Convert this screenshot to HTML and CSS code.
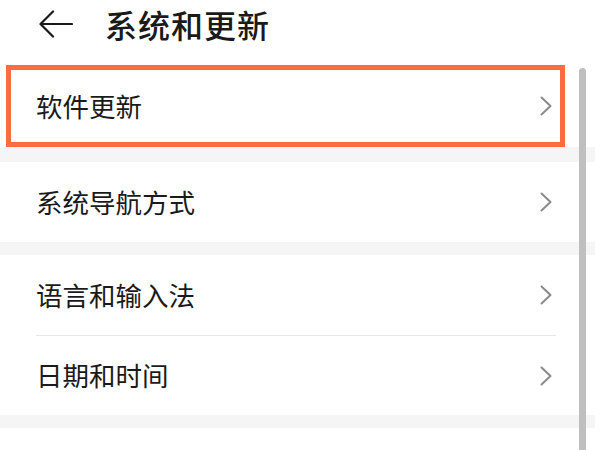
FILE: index.html
```html
<!DOCTYPE html>
<html lang="zh-CN">
<head>
    <meta charset="UTF-8">
    <meta name="viewport" content="width=device-width, initial-scale=1.0">
    <title>系统和更新</title>
    <link rel="stylesheet" href="styles.css">
</head>
<body>
    <div class="screen">
        <!-- 顶部标题栏 -->
        <div class="header">
            <svg class="back" width="34" height="28" viewBox="0 0 34 28">
                <path d="M33 14 H2 M14 1.5 L1.5 14 L14 26.5" fill="none" stroke="#1a1a1a" stroke-width="2.2" stroke-linecap="round" stroke-linejoin="round"/>
            </svg>
            <div class="title">系统和更新</div>
        </div>

        <!-- 高亮的软件更新 -->
        <div class="group highlight">
            <div class="row">
                <span class="label">软件更新</span>
                <svg class="chev" width="12" height="20" viewBox="0 0 12 20"><polyline points="1.5,1.5 10.5,10 1.5,18.5" fill="none" stroke="#8a8a8a" stroke-width="2" stroke-linecap="round" stroke-linejoin="round"/></svg>
            </div>
        </div>
        <div class="band band-first"></div>

        <div class="group">
            <div class="row">
                <span class="label">系统导航方式</span>
                <svg class="chev" width="12" height="20" viewBox="0 0 12 20"><polyline points="1.5,1.5 10.5,10 1.5,18.5" fill="none" stroke="#8a8a8a" stroke-width="2" stroke-linecap="round" stroke-linejoin="round"/></svg>
            </div>
        </div>
        <div class="band"></div>

        <div class="group">
            <div class="row">
                <span class="label">语言和输入法</span>
                <svg class="chev" width="12" height="20" viewBox="0 0 12 20"><polyline points="1.5,1.5 10.5,10 1.5,18.5" fill="none" stroke="#8a8a8a" stroke-width="2" stroke-linecap="round" stroke-linejoin="round"/></svg>
            </div>
            <div class="divider"></div>
            <div class="row row-last">
                <span class="label">日期和时间</span>
                <svg class="chev" width="12" height="20" viewBox="0 0 12 20"><polyline points="1.5,1.5 10.5,10 1.5,18.5" fill="none" stroke="#8a8a8a" stroke-width="2" stroke-linecap="round" stroke-linejoin="round"/></svg>
            </div>
        </div>
        <div class="band"></div>

        <!-- 滚动条 -->
        <div class="scrollbar"></div>
    </div>
</body>
</html>
```

FILE: styles.css
```css
body {
    margin: 0;
    padding: 0;
    background: #ffffff;
    font-family: "Noto Sans CJK SC", "Noto Sans", sans-serif;
    color: #1a1a1a;
}

.screen {
    position: relative;
    width: 600px;
    height: 450px;
    overflow: hidden;
}

.header {
    display: flex;
    align-items: center;
    height: 47px;
    padding-left: 39px;
    margin-bottom: 18px;
}

.back {
    display: block;
}

.title {
    margin-left: 32px;
    font-size: 32px;
    font-weight: 500;
    line-height: 1;
    letter-spacing: 1px;
}

.group {
    background: #ffffff;
}

.highlight {
    margin: 0 35px 0 6px;
    border: 5px solid #fa6d40;
}

.row {
    display: flex;
    align-items: center;
    justify-content: space-between;
    height: 80px;
    padding: 0 48px 0 36px;
}

.highlight .row {
    height: 72px;
    padding: 0 8px 0 25px;
}

.row-last {
    height: 79px;
}

.label {
    font-size: 26.5px;
    line-height: 1;
}

.chev {
    display: block;
}

.divider {
    height: 1px;
    margin: 0 44px 0 36px;
    background: #e6e6e6;
}

.band {
    height: 13px;
    margin-right: 5px;
    background: #f5f5f5;
}

.band-first {
    height: 15px;
}

.scrollbar {
    position: absolute;
    top: 68px;
    bottom: -10px;
    left: 579px;
    width: 7px;
    border-radius: 4px;
    background: #bfbfbf;
}
```
